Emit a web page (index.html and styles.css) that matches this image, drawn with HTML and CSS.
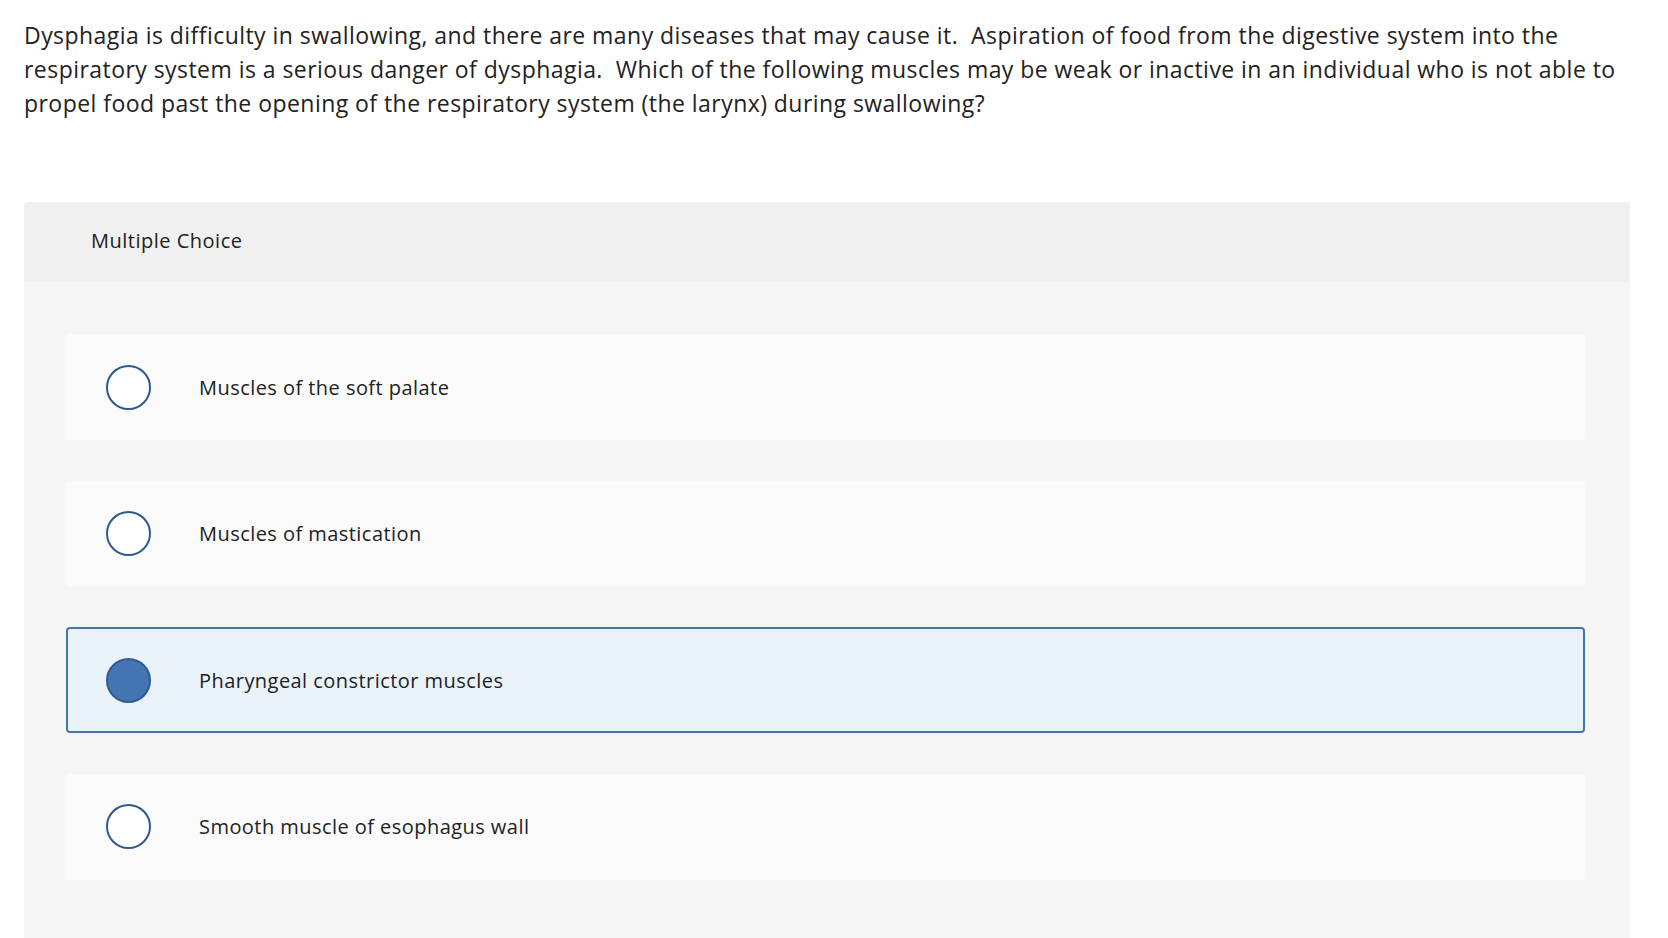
FILE: index.html
```html
<!DOCTYPE html>
<html>
<head>
<meta charset="utf-8">
<link rel="stylesheet" href="styles.css">
</head>
<body>
<div class="page">
  <p class="question">Dysphagia is difficulty in swallowing, and there are many diseases that may cause it.&nbsp; Aspiration of food from the digestive system into the respiratory system is a serious danger of dysphagia.&nbsp; Which of the following muscles may be weak or inactive in an individual who is not able to propel food past the opening of the respiratory system (the larynx) during swallowing?</p>
  <div class="panel">
    <div class="panel-head">Multiple Choice</div>
    <div class="panel-body">
      <div class="option"><span class="radio"></span><span class="label">Muscles of the soft palate</span></div>
      <div class="option"><span class="radio"></span><span class="label">Muscles of mastication</span></div>
      <div class="option selected"><span class="radio"></span><span class="label">Pharyngeal constrictor muscles</span></div>
      <div class="option"><span class="radio"></span><span class="label">Smooth muscle of esophagus wall</span></div>
    </div>
  </div>
</div>
</body>
</html>
```
FILE: styles.css
```css
html, body {
  margin: 0;
  padding: 0;
  background: #ffffff;
}
body {
  font-family: "Open Sans", "Liberation Sans", sans-serif;
  color: #222222;
}
.page {
  padding: 18px 38px 0 24px;
}
.question {
  margin: 0;
  font-size: 23px;
  letter-spacing: 0.45px;
  line-height: 34px;
  color: #222222;
}
.panel {
  margin-top: 82px;
  border-radius: 4px 4px 0 0;
  overflow: hidden;
  background: #f5f5f5;
}
.panel-head {
  height: 80px;
  box-sizing: border-box;
  background: #f0f0f0;
  display: flex;
  align-items: center;
  padding-left: 67px;
  padding-bottom: 3px;
  font-size: 20px;
  letter-spacing: 0.5px;
  color: #222222;
}
.panel-body {
  padding: 52px 45px 60px 42px;
  display: flex;
  flex-direction: column;
  gap: 40.5px;
}
.option {
  height: 106px;
  box-sizing: border-box;
  background: #fafafa;
  border-radius: 4px;
  display: flex;
  align-items: center;
  padding-left: 40px;
  border: 2px solid transparent;
}
.option.selected {
  background: #eaf2fa;
  border-color: #4575b1;
}
.radio {
  width: 45px;
  height: 45px;
  box-sizing: border-box;
  border-radius: 50%;
  border: 2px solid #2c5a8e;
  background: #ffffff;
  flex: none;
  margin-left: -2px;
}
.option.selected .radio {
  background: #4474b1;
  border-color: #2e5c91;
}
.label {
  margin-left: 48px;
  font-size: 20px;
  letter-spacing: 0.45px;
  color: #222222;
}
```
